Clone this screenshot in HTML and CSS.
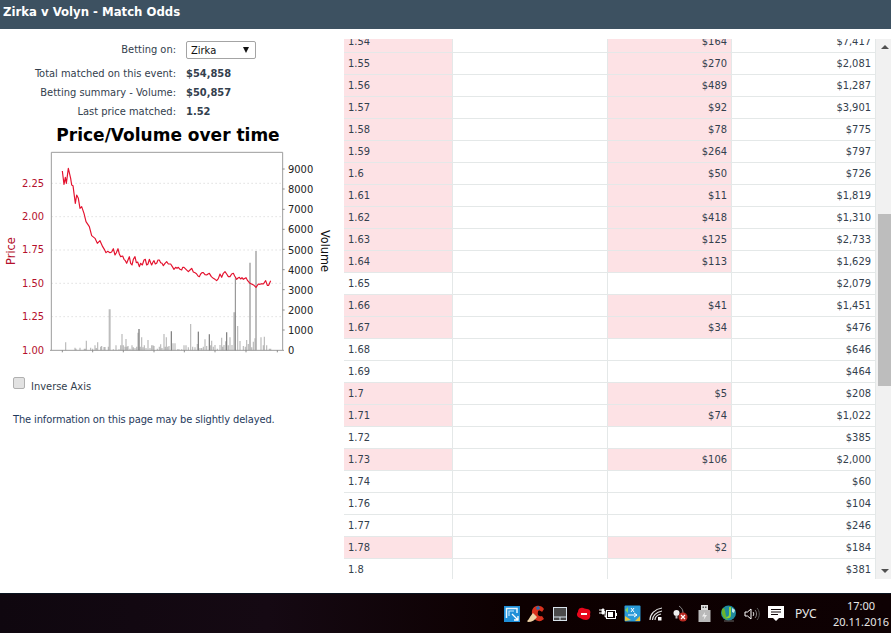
FILE: index.html
```html
<!DOCTYPE html>
<html lang="en">
<head>
<meta charset="utf-8">
<title>Zirka v Volyn - Match Odds</title>
<link rel="stylesheet" href="styles.css">
</head>
<body>
<div class="page">
  <header class="topbar">Zirka v Volyn - Match Odds</header>
  <main class="content">
    <section class="side">
      <div class="summary">
        <div class="label">Betting on:</div>
        <div class="select"><span>Zirka</span></div>
        <div class="label">Total matched on this event:</div><div class="value">$54,858</div>
        <div class="label">Betting summary - Volume:</div><div class="value">$50,857</div>
        <div class="label">Last price matched:</div><div class="value">1.52</div>
      </div>
      <h2 class="chart-title">Price/Volume over time</h2>
      <svg class="chart" width="340" height="220" viewBox="0 0 1020 660">
        <path class="grid" d="M154 100H846M154 200H846M154 300H846M154 400H846M154 500H846"/>
        <path class="axis" d="M154 601V7H848V601M150 601H852"/>
        <path class="ticks" d="M187 601v6M278 601v6M370 601v6M462 601v6M553 601v6M645 601v6M738 601v6M832 601v6M848 57h6M848 117h6M848 178h6M848 238h6M848 298h6M848 359h6M848 419h6M848 480h6M848 540h6"/>
        <path class="bars" d="M197 601V577M225 601V593M228 601V596M240 601V593M253 601V596M256 601V596M259 601V572M272 601V593M278 601V596M285 601V586M289 601V594M293 601V577M302 601V590M305 601V588M312 601V591M315 601V591M325 601V590M340 601V598M348 601V586M357 601V598M362 601V586M366 601V552M370 601V586M375 601V590M378 601V567M381 601V590M384 601V588M390 601V596M396 601V586M400 601V592M405 601V594M410 601V590M414 601V548M417 601V537M421 601V590M425 601V562M429 601V592M433 601V586M438 601V594M444 601V570M450 601V594M455 601V586M459 601V586M462 601V588M472 601V596M478 601V590M482 601V583M486 601V594M492 601V552M496 601V590M499 601V562M503 601V590M507 601V588M514 601V544M519 601V580M525 601V580M533 601V598M537 601V598M545 601V598M552 601V586M558 601V586M565 601V592M572 601V522M578 601V590M585 601V592M592 601V582M595 601V545M600 601V594M605 601V594M610 601V590M615 601V568M620 601V588M628 601V553M632 601V586M635 601V572M640 601V590M645 601V585M652 601V596M660 601V585M665 601V563M668 601V590M672 601V585M677 601V574M680 601V547M685 601V586M690 601V562M696 601V585M713 601V528M720 601V573M730 601V588M736 601V590M740 601V570M745 601V582M755 601V592M760 601V575M765 601V565M783 601V562M790 601V586M793 601V560M800 601V586M808 601V596M812 601V596"/>
        <path class="bars bars-wide" d="M329 601V478M703 601V487M750 601V338M768 601V303"/>
        <path class="bars bars-dark" d="M706 601V385M417 601V537M595 601V545M514 601V544M628 601V553M680 601V547"/>
        <path class="price" d="M187 63L192 103L196 82L199 100L205 55L212 85L215 105L219 107L222 130L226 160L230 135L235 145L240 175L245 170L252 190L258 215L268 230L275 257L285 265L292 280L300 272L308 290L313 298L318 308L323 304L330 308L335 306L340 296L345 315L349 308L354 296L358 312L362 320L368 318L372 328L376 332L380 340L384 330L388 320L392 340L396 345L400 328L405 320L409 338L413 336L418 350L422 340L427 345L432 330L436 328L440 345L444 342L448 328L452 338L455 345L459 336L462 332L466 342L470 340L474 330L478 330L482 338L486 340L490 347L495 340L500 335L505 342L512 342L517 350L522 358L527 352L531 355L535 352L540 358L545 360L548 352L552 352L558 358L565 365L570 360L575 355L580 366L585 368L590 372L594 378L598 380L602 372L606 368L610 368L615 374L620 375L624 372L628 370L634 380L640 385L645 388L650 392L655 386L660 372L665 382L670 370L675 365L680 372L685 380L690 380L695 372L700 370L704 378L710 388L714 384L718 382L722 387L726 383L730 388L738 383L743 392L750 400L756 403L762 406L768 412L775 402L780 403L785 401L790 402L797 392L802 406L806 406L812 392"/>
        <g class="tick-price">
          <text x="132" y="110">2.25</text>
          <text x="132" y="210">2.00</text>
          <text x="132" y="310">1.75</text>
          <text x="132" y="410">1.50</text>
          <text x="132" y="510">1.25</text>
          <text x="132" y="611">1.00</text>
        </g>
        <g class="tick-vol">
          <text x="864" y="70">9000</text>
          <text x="864" y="130">8000</text>
          <text x="864" y="190">7000</text>
          <text x="864" y="250">6000</text>
          <text x="864" y="311">5000</text>
          <text x="864" y="372">4000</text>
          <text x="864" y="432">3000</text>
          <text x="864" y="493">2000</text>
          <text x="864" y="553">1000</text>
          <text x="864" y="612">0</text>
        </g>
        <text class="axis-title price-title" transform="translate(46 303) rotate(-90)">Price</text>
        <text class="axis-title" transform="translate(962 303) rotate(90)">Volume</text>
      </svg>
      <label class="inverse"><input type="checkbox" class="check"><span>Inverse Axis</span></label>
      <p class="notice">The information on this page may be slightly delayed.</p>
    </section>
    <section class="ladder">
      <div class="ladder-clip">
        <table class="odds">
          <colgroup><col class="c1"><col class="c2"><col class="c3"><col class="c4"></colgroup>
          <tbody>
            <tr class="hit"><td>1.54</td><td></td><td>$164</td><td>$7,417</td></tr>
            <tr class="hit"><td>1.55</td><td></td><td>$270</td><td>$2,081</td></tr>
            <tr class="hit"><td>1.56</td><td></td><td>$489</td><td>$1,287</td></tr>
            <tr class="hit"><td>1.57</td><td></td><td>$92</td><td>$3,901</td></tr>
            <tr class="hit"><td>1.58</td><td></td><td>$78</td><td>$775</td></tr>
            <tr class="hit"><td>1.59</td><td></td><td>$264</td><td>$797</td></tr>
            <tr class="hit"><td>1.6</td><td></td><td>$50</td><td>$726</td></tr>
            <tr class="hit"><td>1.61</td><td></td><td>$11</td><td>$1,819</td></tr>
            <tr class="hit"><td>1.62</td><td></td><td>$418</td><td>$1,310</td></tr>
            <tr class="hit"><td>1.63</td><td></td><td>$125</td><td>$2,733</td></tr>
            <tr class="hit"><td>1.64</td><td></td><td>$113</td><td>$1,629</td></tr>
            <tr><td>1.65</td><td></td><td></td><td>$2,079</td></tr>
            <tr class="hit"><td>1.66</td><td></td><td>$41</td><td>$1,451</td></tr>
            <tr class="hit"><td>1.67</td><td></td><td>$34</td><td>$476</td></tr>
            <tr><td>1.68</td><td></td><td></td><td>$646</td></tr>
            <tr><td>1.69</td><td></td><td></td><td>$464</td></tr>
            <tr class="hit"><td>1.7</td><td></td><td>$5</td><td>$208</td></tr>
            <tr class="hit"><td>1.71</td><td></td><td>$74</td><td>$1,022</td></tr>
            <tr><td>1.72</td><td></td><td></td><td>$385</td></tr>
            <tr class="hit"><td>1.73</td><td></td><td>$106</td><td>$2,000</td></tr>
            <tr><td>1.74</td><td></td><td></td><td>$60</td></tr>
            <tr><td>1.76</td><td></td><td></td><td>$104</td></tr>
            <tr><td>1.77</td><td></td><td></td><td>$246</td></tr>
            <tr class="hit"><td>1.78</td><td></td><td>$2</td><td>$184</td></tr>
            <tr><td>1.8</td><td></td><td></td><td>$381</td></tr>
          </tbody>
        </table>
      </div>
      <div class="scrollbar">
        <div class="arrow-up"></div>
        <div class="thumb"></div>
        <div class="arrow-down"></div>
      </div>
    </section>
  </main>
  <footer class="taskbar">
    <div class="tray">
      <span class="tray-item"><svg width="18" height="18" viewBox="0 0 18 18"><rect x="1" y="1" width="16" height="16" fill="#1f8fd8"/><path d="M3.500 13V3.500H14V8" fill="none" stroke="#e8f6ff" stroke-width="1.500"/><path d="M6 11V6H11" fill="none" stroke="#bfe6ff" stroke-width="1.200"/><path d="M9 9L15 15M15 11V15H11" fill="none" stroke="#fff" stroke-width="1.300"/></svg></span>
      <span class="tray-item"><svg width="18" height="18" viewBox="0 0 18 18"><path d="M17 4C14 -1 6 0 5 6C4 12 9 17 14 16L17 14L15 11C12 12 10 10 11 7C11 5 13 5 15 7Z" fill="#d8321e"/><path d="M9 2L12 1L13 4L10 5Z" fill="#2a6fb0"/><path d="M0 16C2 15 3 11 6 8L10 12C8 15 5 17 1 17Z" fill="#eed3a6"/></svg></span>
      <span class="tray-item"><svg width="16" height="16" viewBox="0 0 16 16"><rect x="1.500" y="1.500" width="13" height="13" fill="#4a4a4a" stroke="#d7e2ea"/><path d="M2 11H14M8 11V14" stroke="#d7e2ea"/></svg></span>
      <span class="tray-item"><svg width="16" height="16" viewBox="0 0 16 16"><path d="M5 2C7 1 9 3 11 3C14 3 15 6 14 8C15 11 13 14 10 14C8 14 6 13 4 12C1 11 0 8 2 6C2 4 3 2 5 2Z" fill="#e8061c"/><rect x="5" y="7" width="6" height="2" fill="#fff"/></svg></span>
      <span class="tray-item"><svg width="18" height="12" viewBox="0 0 18 12"><path d="M0 2H3M0 5H3" stroke="#fff"/><path d="M3 1H5V6H3ZM5 3.500H6V9H7" fill="#fff" stroke="#fff" stroke-width=".8"/><rect x="7.500" y="2.500" width="9" height="8" fill="none" stroke="#fff"/><rect x="9" y="4" width="5" height="5" fill="#fff"/><rect x="17" y="5" width="1" height="3" fill="#fff"/></svg></span>
      <span class="tray-item"><svg width="17" height="17" viewBox="0 0 17 17"><rect x=".5" y=".5" width="16" height="16" rx="1" fill="#2a9ad8"/><path d="M1 11L7 15L1 16ZM11 16L16 11V16Z" fill="#e8c23a"/><path d="M7 3L10 7M10 3L7 7M4 10H13M10 8L13 10L10 12" fill="none" stroke="#fff"/><path d="M1 5L4 2V8Z" fill="#7fcf6a"/></svg></span>
      <span class="tray-item"><svg width="14" height="14" viewBox="0 0 14 14"><g fill="none" stroke="#e4e4e4" stroke-width="1.200"><path d="M1 13C1 7 6 2 13 1"/><path d="M3.500 13C3.500 9 7 5 13 4"/><path d="M6 13C6 10.500 8 8 12 7"/></g><rect x="9" y="10" width="3.500" height="3.500" fill="#fff"/></svg></span>
      <span class="tray-item"><svg width="17" height="17" viewBox="0 0 17 17"><circle cx="4.500" cy="8" r="3" fill="#eee"/><rect x="3.500" y="10.500" width="2" height="3" fill="#bbb"/><path d="M7 1C10 3 11 5 11 8" fill="none" stroke="#888"/><circle cx="11" cy="12" r="4.500" fill="#b82a22"/><path d="M9 10L13 14M13 10L9 14" stroke="#fff" stroke-width="1.200"/></svg></span>
      <span class="tray-item"><svg width="13" height="17" viewBox="0 0 13 17"><rect x="3" y="0" width="7" height="5" fill="#ddd"/><rect x="4.500" y="1.500" width="1.500" height="1.500" fill="#555"/><rect x="7" y="1.500" width="1.500" height="1.500" fill="#555"/><rect x="0.500" y="5" width="12" height="12" fill="#b9b9b9"/><path d="M7 7L4 11.500H6.500L5.500 15L9 10H6.500Z" fill="#eee"/></svg></span>
      <span class="tray-item"><svg width="17" height="17" viewBox="0 0 17 17"><circle cx="8.500" cy="8" r="7.500" fill="#1f8a9e"/><path d="M2 4C1 9 3 14 8 15C5 11 6 7 4 3Z" fill="#6bb52e"/><path d="M9 2H11L11 10C11 14 7 14 6 12C8 12 9 11 9 9Z" fill="#8fd13a"/><path d="M12 3L15 5L14 8L12 7Z" fill="#bfe8ee"/><path d="M4 16H14" stroke="#666"/></svg></span>
      <span class="tray-item"><svg width="16" height="14" viewBox="0 0 16 14"><path d="M1 5H3.500L7 2V12L3.500 9H1Z" fill="none" stroke="#fff"/><path d="M9 5C10 6 10 8 9 9" fill="none" stroke="#ddd"/><path d="M11 3C13 5 13 9 11 11" fill="none" stroke="#888"/><path d="M13 1C16 4 16 10 13 13" fill="none" stroke="#555"/></svg></span>
      <span class="tray-item"><svg width="16" height="17" viewBox="0 0 16 17"><path d="M0 1H16V13H11L8 16L5 13H0Z" fill="#fff"/><path d="M3 4.500H13M3 7H13M3 9.500H10" stroke="#0f0508" stroke-width="1"/></svg></span>
    </div>
    <div class="lang">РУС</div>
    <div class="clock"><div>17:00</div><div>20.11.2016</div></div>
  </footer>
</div>
</body>
</html>
```

FILE: styles.css
```css
* { box-sizing: border-box; }
html, body { margin: 0; padding: 0; }
body {
  font-family: "DejaVu Sans Condensed", "DejaVu Sans", sans-serif;
  font-size: 11px;
  color: #33404d;
  background: #fff;
}
.page {
  width: 891px;
  height: 633px;
  display: flex;
  flex-direction: column;
  overflow: hidden;
}
.topbar {
  height: 29px;
  flex: none;
  padding: 3px 0 0 3px;
  line-height: 17px;
  background: #3d5161;
  color: #fff;
  font-size: 13px;
  font-weight: 700;
}
.content {
  flex: 1;
  min-height: 0;
  display: flex;
}
.side {
  width: 344px;
  flex: none;
}
.summary {
  display: grid;
  grid-template-columns: 176px 1fr;
  grid-template-rows: 29px;
  column-gap: 10px;
  grid-auto-rows: 19px;
  margin-top: 6px;
  align-items: center;
}
.label { text-align: right; }
.value { font-weight: 700; }
.select {
  position: relative;
  width: 70px;
  height: 18px;
  line-height: 17px;
  padding-left: 4px;
  color: #111;
  border: 1px solid #a4a4a4;
  border-radius: 2px;
  background: #fff;
}
.select::after {
  content: "";
  position: absolute;
  right: 6px;
  top: 5px;
  border-left: 3.500px solid transparent;
  border-right: 3.500px solid transparent;
  border-top: 6px solid #111;
}
.chart-title {
  margin: 4px 0 0;
  width: 336px;
  text-align: center;
  font-family: "DejaVu Sans", sans-serif;
  font-size: 17px;
  line-height: 20px;
  font-weight: 700;
  color: #000;
}
.chart {
  display: block;
  margin-top: 5px;
}
.chart text { font-family: "DejaVu Sans Condensed", "DejaVu Sans", sans-serif; font-size: 33px; }
.grid { fill: none; stroke: #ddd; stroke-width: 2.500; stroke-dasharray: 5 7; }
.axis { fill: none; stroke: #9d9d9d; stroke-width: 3; }
.ticks { fill: none; stroke: #777; stroke-width: 2.500; }
.bars { fill: none; stroke: #8a8a8a; stroke-width: 3.500; opacity: .6; }
.bars-wide { stroke-width: 6; opacity: .65; stroke: #999; }
.bars-dark { stroke: #666; stroke-width: 3; opacity: .8; }
.price { fill: none; stroke: #e4122e; stroke-width: 3.500; stroke-linejoin: round; }
.tick-price text { fill: #b4102c; text-anchor: end; }
.tick-vol text { fill: #222; }
.chart .axis-title { font-size: 38px; fill: #111; text-anchor: middle; }
.chart .price-title { fill: #b4102c; }
.inverse {
  display: flex;
  align-items: flex-start;
  margin: 7px 0 0 13px;
  line-height: 20px;
}
.check {
  appearance: none;
  width: 12px;
  height: 12px;
  margin: 0 6px 0 0;
  border: 1px solid #b0b0b0;
  border-radius: 2px;
  background: #e2e2e2;
}
.notice {
  margin: 15px 0 0 13px;
  line-height: 15px;
  letter-spacing: -.12px;
  color: #1f3a5c;
}
.ladder {
  flex: 1;
  min-width: 0;
  display: flex;
  padding: 10px 0 14px;
}
.ladder-clip {
  width: 532px;
  flex: none;
  overflow: hidden;
}
.odds {
  table-layout: fixed;
  width: 532px;
  margin-top: -8px;
  border-collapse: separate;
  border-spacing: 0;
}
.c1 { width: 109px; }
.c2 { width: 155px; }
.c3 { width: 124px; }
.c4 { width: 144px; }
.odds td {
  height: 22px;
  padding: 0 4px;
  border-bottom: 1px solid #e4e8e8;
  border-right: 1px solid #e4e8e8;
  text-align: right;
}
.odds td:first-child { text-align: left; }
.hit td:nth-child(1), .hit td:nth-child(3) { background: #fde2e5; }
.scrollbar {
  width: 15px;
  flex: none;
  display: flex;
  flex-direction: column;
  align-items: center;
  background: #f1f1f1;
}
.arrow-up {
  margin-top: 6px;
  margin-left: 2px;
  border-left: 4px solid transparent;
  border-right: 4px solid transparent;
  border-bottom: 4px solid #505050;
}
.thumb {
  width: 13px;
  height: 172px;
  margin: 165px 0 0 2px;
  background: #bdbdbd;
}
.arrow-down {
  margin: auto 0 6px 2px;
  border-left: 4px solid transparent;
  border-right: 4px solid transparent;
  border-top: 4px solid #505050;
}
.taskbar {
  height: 40px;
  flex: none;
  display: flex;
  align-items: center;
  padding-left: 500px;
  border-top: 1px solid #0a1420;
  background: linear-gradient(90deg, #0f070f 0%, #150913 30%, #0d0000 58%, #0e0103 100%);
  color: #e6e6e6;
  font-family: "Noto Sans", sans-serif;
  font-size: 12px;
}
.tray { display: flex; }
.tray-item {
  width: 24px;
  height: 24px;
  display: flex;
  align-items: center;
  justify-content: center;
}
.lang { width: 36px; padding-left: 7px; }
.clock {
  width: 67px;
  padding-left: 7px;
  text-align: center;
  font-size: 11px;
  line-height: 16px;
}
```
